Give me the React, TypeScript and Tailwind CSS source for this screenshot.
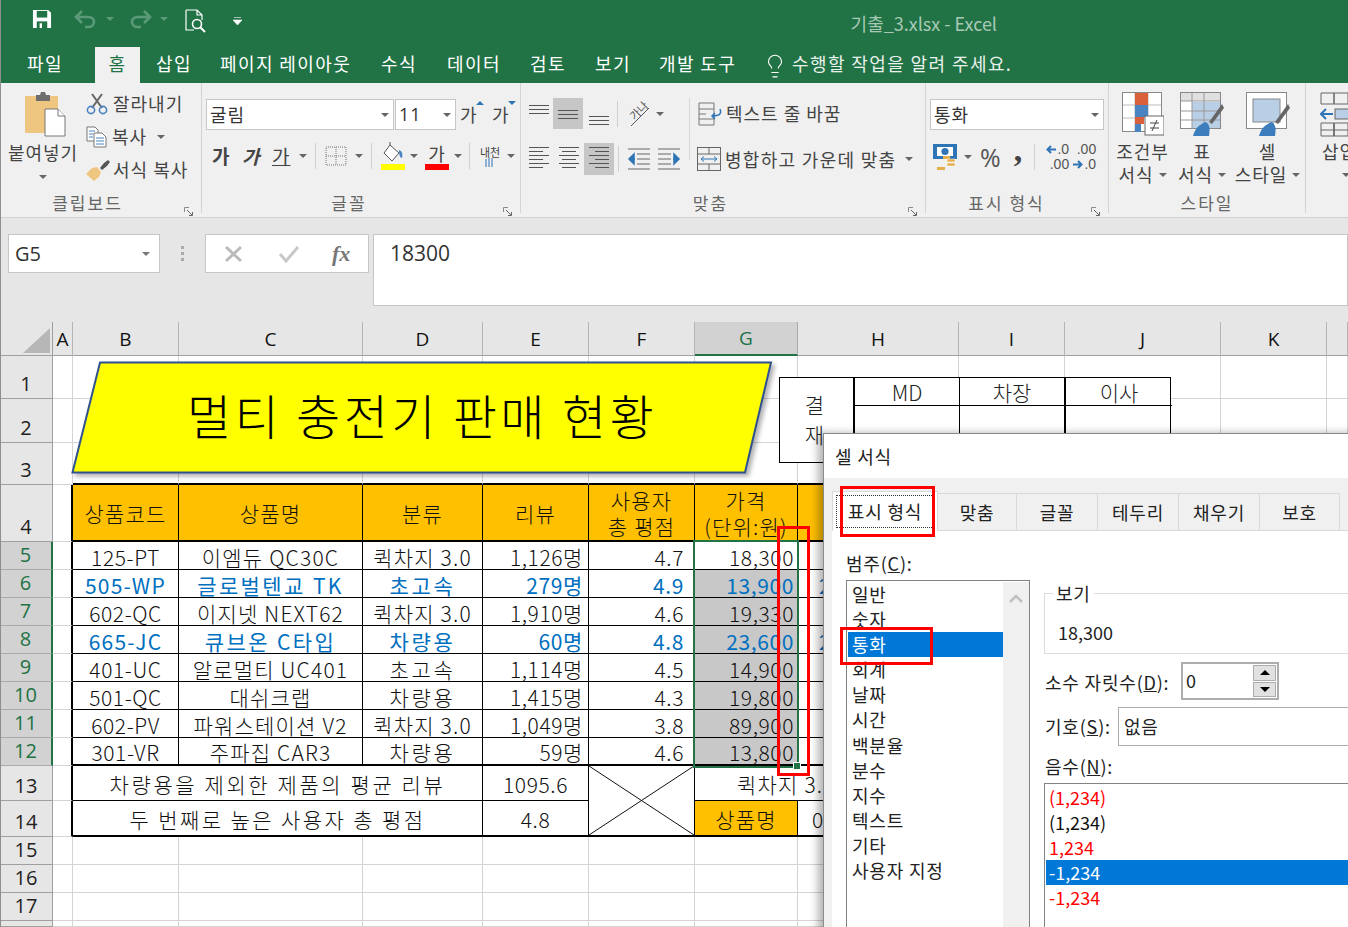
import type { ReactNode } from 'react';
import { Lightbulb } from 'lucide-react';

const Caret = ({ color = '#666', className = '' }: { color?: string; className?: string }) => (
  <svg width="8" height="4" viewBox="0 0 8 4" className={`shrink-0 ${className}`}>
    <path d="M0 0h8L4 4z" fill={color} />
  </svg>
);

function Launcher() {
  return (
    <svg width="10" height="10" viewBox="0 0 10 10" className="shrink-0">
      <path d="M.5 5V.5H5" fill="none" stroke="#8a8a8a" />
      <path d="M3 3l5 5M5 8.5h3.500V5" fill="none" stroke="#666" />
    </svg>
  );
}

// alignment icon, stacked lines
function AlignIcon({ lines, top = 0 }: { lines: [number, number][]; top?: number }) {
  return (
    <svg width="22" height="24" viewBox="0 0 22 24" className="shrink-0">
      {lines.map(([x, w], i) => (
        <rect key={i} x={x} y={top + i * 4} width={w} height="1" fill="#555" />
      ))}
    </svg>
  );
}

function SaveIcon() {
  return (
    <svg width="20" height="20" viewBox="0 0 21 21">
      <path d="M1 1h16l3 3v16H1z" fill="#fff" />
      <rect x="5" y="2" width="11" height="7" fill="#217346" />
      <rect x="5" y="13" width="11" height="7" fill="#217346" />
      <rect x="8" y="15" width="2.500" height="5" fill="#fff" />
    </svg>
  );
}

function UndoIcon({ flip = false }: { flip?: boolean }) {
  return (
    <svg width="23" height="20" viewBox="0 0 23 20" className={flip ? '-scale-x-100' : ''}>
      <path d="M8 2L2 8l6 6M2 8h12c4 0 6 2.500 6 5s-2 5-6 5h-3" fill="none" stroke="#5b9a78" strokeWidth="2.600" />
    </svg>
  );
}

function PreviewIcon() {
  return (
    <svg width="23" height="24" viewBox="0 0 23 24" fill="none" stroke="#fff" strokeWidth="1.200">
      <path d="M1 1h11l5 5v5M12 1v5h5M9 21H1V1" />
      <circle cx="12" cy="15" r="4.500" strokeWidth="1.600" />
      <path d="M15 18l5 5" strokeWidth="2" />
    </svg>
  );
}

function PasteIcon() {
  return (
    <svg width="42" height="46" viewBox="0 0 42 46">
      <rect x="0" y="5" width="33" height="37" rx="1" fill="#efc67f" />
      <path d="M11 4h4l1-3h4l1 3h4v6H11z" fill="#6e6e6e" />
      <path d="M20 18h13l7 7v20H20z" fill="#fff" stroke="#777" />
      <path d="M33 18v7h7" fill="#fff" stroke="#777" />
    </svg>
  );
}

function ScissorsIcon() {
  return (
    <svg width="22" height="22" viewBox="0 0 22 22" fill="none">
      <path d="M6 15L16 1M16 15L6 1" stroke="#666" strokeWidth="2" />
      <circle cx="5" cy="17" r="3.600" stroke="#4a83c2" strokeWidth="1.600" />
      <circle cx="17" cy="17" r="3.600" stroke="#4a83c2" strokeWidth="1.600" />
    </svg>
  );
}

function CopyIcon() {
  return (
    <svg width="21" height="22" viewBox="0 0 21 22">
      <path d="M1 1h8l3 3v11H1z" fill="#fff" stroke="#777" />
      <path d="M8 7h8l4 4v10H8z" fill="#fff" stroke="#777" />
      <path d="M3 5h6M3 8h4M3 11h4" stroke="#4a83c2" />
      <path d="M10 12h8M10 15h8M10 18h8" stroke="#4a83c2" />
    </svg>
  );
}

function BrushIcon() {
  return (
    <svg width="24" height="22" viewBox="0 0 24 22">
      <path d="M14 9l4-5 4-3 2 2-3 4-5 4z" fill="#555" />
      <path d="M0 15l6-6 5-1 4 5-2 5-5 4z" fill="#efc67f" />
    </svg>
  );
}

function BorderIcon() {
  return (
    <svg width="22" height="20" viewBox="0 0 22 20" fill="none" stroke="#777" strokeDasharray="1 1">
      <rect x="1" y="1" width="20" height="18" />
      <path d="M11 1v18M1 10h20" />
    </svg>
  );
}

function BucketIcon() {
  return (
    <svg width="24" height="28" viewBox="0 0 24 28">
      <path d="M9 3l9 8-7 8-8-8z" fill="#fff" stroke="#555" />
      <path d="M9 3V0" stroke="#555" />
      <path d="M18 8c3 1 4 4 3 8-2 0-3-3-3-8z" fill="#4a83c2" />
      <rect x="0" y="22" width="24" height="6" fill="#ffff00" />
    </svg>
  );
}

function OrientIcon() {
  return (
    <div className="relative h-[26px] w-[24px] shrink-0">
      <span className="absolute left-[1px] top-[3px] -rotate-45 whitespace-nowrap text-[11px] leading-[12px] tracking-normal text-[#555]">가나</span>
      <svg width="24" height="26" viewBox="0 0 24 26" fill="none" stroke="#555" className="absolute inset-0">
        <path d="M4 25L22 7" />
      </svg>
    </div>
  );
}

function WrapIcon() {
  return (
    <svg width="25" height="24" viewBox="0 0 25 24" fill="none">
      <path d="M1 1h15v22H1z" stroke="#777" />
      <path d="M1 7h15M1 12h7M1 17h15" stroke="#777" />
      <path d="M22 7c2 5-1 7-8 7m3-3l-3 3 3 3" stroke="#2f75b5" strokeWidth="1.500" />
    </svg>
  );
}

function IndentIcon({ right = false }: { right?: boolean }) {
  return (
    <svg width="24" height="22" viewBox="0 0 24 22" fill="none" className={right ? '-scale-x-100' : ''}>
      <path d="M1 1h22M10 6h13M10 11h13M10 16h13M1 21h22" stroke="#666" />
      <path d="M7 6l-5 5 5 5zM6 11h2" fill="#2f75b5" stroke="#2f75b5" strokeWidth="1.500" />
    </svg>
  );
}

function MergeIcon() {
  return (
    <svg width="25" height="24" viewBox="0 0 25 24" fill="none">
      <rect x=".5" y=".5" width="23" height="23" stroke="#666" />
      <path d="M1 7h23M1 17h23M12 1v6M12 17v6" stroke="#666" />
      <path d="M4 12h16M7 9.500L4 12l3 2.500M17 9.500l3 2.500-3 2.500" stroke="#2f75b5" />
    </svg>
  );
}

function CurrencyIcon() {
  return (
    <svg width="26" height="28" viewBox="0 0 26 28">
      <rect x="0" y="1" width="24" height="15" fill="#2f75b5" />
      <rect x="4" y="4" width="16" height="9" fill="#fff" />
      <circle cx="12" cy="8.500" r="3.600" fill="#2f75b5" />
      <rect x="10" y="13" width="7" height="3" fill="#e5ae4d" />
      <rect x="14" y="16" width="8" height="3" fill="#e5ae4d" stroke="#fff" strokeWidth=".5" />
      <rect x="14" y="20" width="8" height="3" fill="#e5ae4d" stroke="#fff" strokeWidth=".5" />
      <rect x="4" y="24" width="8" height="3" fill="#e5ae4d" />
    </svg>
  );
}

const SmallArrow = ({ right = false }: { right?: boolean }) => (
  <svg width="10" height="9" viewBox="0 0 10 9" fill="none" stroke="#2f75b5" strokeWidth="2" className={`mr-[1px] ${right ? '-scale-x-100' : ''}`}>
    <path d="M5 1L1.500 4.500 5 8M2 4.500h8" />
  </svg>
);

function DecimalIcon({ more = false }: { more?: boolean }) {
  return (
    <div className="flex w-[26px] flex-col items-end text-[14px] leading-[15px] tracking-normal text-[#555] [font-family:'Liberation_Sans']">
      <div className="flex items-center">
        {more && <SmallArrow />}
        <span>{more ? '.0' : '.00'}</span>
      </div>
      <div className="flex items-center">
        {!more && <SmallArrow right />}
        <span>{more ? '.00' : '.0'}</span>
      </div>
    </div>
  );
}

function CondFormatIcon() {
  return (
    <svg width="42" height="44" viewBox="0 0 42 44">
      <rect x=".5" y=".5" width="39" height="39" fill="#fff" stroke="#888" />
      <path d="M13 1v38M26 1v38M1 13h38M1 26h38" stroke="#bbb" />
      <rect x="13" y="1" width="13" height="12" fill="#d9603b" />
      <rect x="13" y="13" width="13" height="12" fill="#4a83c2" />
      <rect x="13" y="25" width="9" height="7" fill="#d9603b" />
      <rect x="13" y="32" width="6" height="8" fill="#4a83c2" />
      <rect x="23" y="24" width="19" height="19" fill="#fff" stroke="#666" />
      <path d="M28 31h9M28 36h9M35 28l-5 11" stroke="#444" />
    </svg>
  );
}

function TableStyleIcon() {
  return (
    <svg width="44" height="44" viewBox="0 0 44 44">
      <rect x=".5" y=".5" width="40" height="36" fill="#fff" stroke="#888" />
      <rect x="1" y="1" width="39" height="8" fill="#e0e0e0" />
      <rect x="12" y="10" width="28" height="26" fill="#b9cfe6" />
      <path d="M12 1v36M24 1v36M1 9h39M1 19h39M1 28h39" stroke="#999" />
      <path d="M42 12l2 4-12 16-3-2z" fill="#666" />
      <path d="M13 44c2-8 7-12 13-14 4 3 4 7 3 14z" fill="#3c7ebd" />
    </svg>
  );
}

function CellStyleIcon() {
  return (
    <svg width="44" height="44" viewBox="0 0 44 44">
      <rect x=".5" y=".5" width="40" height="36" fill="#fff" stroke="#888" />
      <rect x="7" y="7" width="27" height="23" fill="#b9cfe6" stroke="#888" />
      <path d="M42 12l2 4-12 16-3-2z" fill="#666" />
      <path d="M13 44c2-8 7-12 13-14 4 3 4 7 3 14z" fill="#3c7ebd" />
    </svg>
  );
}

function InsertCellIcon() {
  return (
    <svg width="30" height="46" viewBox="0 0 30 46" fill="none">
      <path d="M1 1h13v11H1zM14 1h14v11H14zM1 31h13v13H1zM14 31h14v13H14zM1 38h27M14 31v13" stroke="#666" />
      <rect x="15" y="17" width="15" height="10" fill="#b9cfe6" stroke="#666" />
      <path d="M1 22h12M6 17l-5 5 5 5" stroke="#2f75b5" strokeWidth="2" />
    </svg>
  );
}

function Dropdown({ text, width, latin = false }: { text: string; width: string; latin?: boolean }) {
  return (
    <div className={`flex h-[31px] items-center justify-between border border-[#c6c6c6] bg-white pl-[3px] pr-[4px] text-[18px] text-[#333] ${width} ${latin ? "[font-family:'Open_Sans']" : ''}`}>
      <span>{text}</span>
      <Caret />
    </div>
  );
}

function GroupLabel({ text, launcher = true, offset = '' }: { text: string; launcher?: boolean; offset?: string }) {
  return (
    <div className={`absolute -bottom-[1px] left-0 right-0 text-center text-[17px] leading-[22px] text-[#666] tracking-[2px] ${offset}`}>
      {text}
      {launcher && <div className="absolute bottom-[-3px] right-[7px]"><Launcher /></div>}
    </div>
  );
}

function TitleBar() {
  const tabs: [string, string][] = [
    ['파일', 'w-[68px]'],
    ['', 'w-[45px]'],
    ['삽입', 'ml-[16px] w-[64px]'],
    ['페이지 레이아웃', 'w-[161px]'],
    ['수식', 'w-[66px]'],
    ['데이터', 'w-[83px]'],
    ['검토', 'w-[65px]'],
    ['보기', 'w-[64px]'],
    ['개발 도구', 'w-[108px]'],
  ];
  return (
    <header className="h-[83px] shrink-0 bg-[#217346] text-white">
      <div className="flex h-[47px] items-start pl-[32px] pt-[9px]">
        <SaveIcon />
        <div className="ml-[22px]"><UndoIcon /></div>
        <Caret color="#5b9a78" className="ml-[9px] mt-[8px]" />
        <div className="ml-[15px]"><UndoIcon flip /></div>
        <Caret color="#5b9a78" className="ml-[8px] mt-[8px]" />
        <div className="ml-[17px]"><PreviewIcon /></div>
        <svg width="9" height="8" viewBox="0 0 9 8" className="ml-[25px] mt-[8px]">
          <path d="M1 .5h7M0 3h9L4.500 8z" fill="#fff" stroke="#fff" strokeWidth=".6" />
        </svg>
        <span className="ml-auto mr-[351px] mt-[2px] text-[18px] leading-[24px] text-[#a9c9b6]">기출_3.xlsx - Excel</span>
      </div>
      <nav className="flex h-[36px] pl-[27px] text-[18px] tracking-[1.4px]">
        {tabs.map(([label, cls], i) =>
          i === 1 ? (
            <div key={i} className={`flex items-center justify-center bg-[#f0f0f0] pb-[3px] text-[#217346] ${cls}`}>홈</div>
          ) : (
            <div key={i} className={`flex items-center pb-[3px] ${cls}`}>{label}</div>
          ),
        )}
        <div className="flex w-[25px] items-center pt-[2px]"><Lightbulb size={26} strokeWidth={1} className="-ml-[5px]" /></div>
        <div className="flex items-center pb-[3px] text-[#e9f1ec]">수행할 작업을 알려 주세요.</div>
      </nav>
    </header>
  );
}

function Ribbon() {
  return (
    <section className="flex h-[135px] shrink-0 border-b border-[#d2d2d2] bg-[#f0f0f0] text-[18px] tracking-[1px] text-[#444]">
      {/* 클립보드 */}
      <div className="relative flex h-[130px] w-[202px] shrink-0 border-r border-[#d4d4d4] pt-[8px]">
        <div className="flex w-[86px] flex-col items-center">
          <div className="ml-[5px]"><PasteIcon /></div>
          <span className="mt-[3px] whitespace-nowrap leading-[24px]">붙여넣기</span>
          <Caret className="mt-[11px]" />
        </div>
        <div className="-mt-[4px] flex flex-col">
          <div className="flex h-[33px] items-center gap-[5px]"><ScissorsIcon /><span>잘라내기</span></div>
          <div className="flex h-[33px] items-center gap-[5px]"><CopyIcon /><span>복사</span><Caret className="ml-[5px]" /></div>
          <div className="flex h-[33px] items-center gap-[3px]"><BrushIcon /><span>서식 복사</span></div>
        </div>
        <GroupLabel text="클립보드" offset="pr-[26px]" />
      </div>
      {/* 글꼴 */}
      <div className="relative h-[130px] w-[319px] shrink-0 border-r border-[#d4d4d4] pl-[4px] pt-[16px]">
        <div className="flex items-center">
          <Dropdown text="굴림" width="w-[188px]" />
          <Dropdown text="11" width="ml-[1px] w-[61px]" latin />
          <div className="relative ml-[4px] w-[18px]">가<span className="absolute -right-[6px] top-0 h-0 w-0 border-x-[4px] border-b-[4px] border-x-transparent border-b-[#2f75b5]" /></div>
          <div className="relative ml-[14px] w-[18px]">가<span className="absolute -right-[6px] top-0 h-0 w-0 border-x-[4px] border-t-[4px] border-x-transparent border-t-[#2f75b5]" /></div>
        </div>
        <div className="mt-[10px] flex h-[32px] items-center">
          <span className="ml-[6px] w-[30px] text-[19px] font-bold">가</span>
          <span className="w-[30px] text-[19px] font-bold italic">가</span>
          <span className="w-[24px] text-[19px] underline">가</span>
          <Caret className="ml-[3px]" />
          <span className="ml-[8px] mr-[9px] h-[26px] w-px bg-[#d0d0d0]" />
          <BorderIcon />
          <Caret className="ml-[8px]" />
          <span className="ml-[8px] mr-[9px] h-[26px] w-px bg-[#d0d0d0]" />
          <BucketIcon />
          <Caret className="ml-[5px]" />
          <div className="ml-[7px] flex w-[24px] flex-col items-center leading-[22px]">
            <span className="h-[22px]">가</span>
            <span className="h-[6px] w-[24px] bg-[#ff0000]" />
          </div>
          <Caret className="ml-[5px]" />
          <span className="ml-[7px] mr-[9px] h-[26px] w-px bg-[#d0d0d0]" />
          <div className="flex w-[22px] flex-col items-center text-[11px] leading-[12px] tracking-normal">
            <span className="whitespace-nowrap">내천</span>
            <svg width="10" height="9" viewBox="0 0 10 9"><path d="M1 1v8M4 0v9M7 0v9" stroke="#2f75b5" /></svg>
          </div>
          <Caret className="ml-[6px]" />
        </div>
        <GroupLabel text="글꼴" offset="pr-[24px]" />
      </div>
      {/* 맞춤 */}
      <div className="relative h-[130px] w-[405px] shrink-0 border-r border-[#d4d4d4] pl-[8px] pt-[15px]">
        <div className="flex h-[31px] items-center">
          <div className="flex w-[24px] items-center"><AlignIcon top={3} lines={[[0, 20], [0, 20], [0, 20]]} /></div>
          <div className="flex h-[31px] w-[30px] items-center justify-center bg-[#c6c6c6]"><AlignIcon top={8} lines={[[1, 20], [1, 20], [1, 20]]} /></div>
          <div className="ml-[6px] flex w-[22px] items-center"><AlignIcon top={14} lines={[[0, 20], [0, 20], [0, 20]]} /></div>
          <span className="ml-[6px] mr-[9px] h-[26px] w-px bg-[#d0d0d0]" />
          <OrientIcon />
          <Caret className="ml-[5px]" />
          <span className="ml-[25px] mr-[8px] h-[62px] w-px self-start bg-[#d8d8d8]" />
          <WrapIcon />
          <span className="ml-[3px]">텍스트 줄 바꿈</span>
        </div>
        <div className="mt-[14px] flex h-[32px] items-center">
          <div className="w-[30px]"><AlignIcon lines={[[0, 20], [0, 14], [0, 20], [0, 14], [0, 20], [0, 14]]} /></div>
          <div className="w-[25px]"><AlignIcon lines={[[0, 20], [3, 14], [0, 20], [3, 14], [0, 20], [3, 14]]} /></div>
          <div className="flex h-[32px] w-[30px] items-center justify-center bg-[#c6c6c6]"><AlignIcon lines={[[1, 20], [7, 14], [1, 20], [7, 14], [1, 20], [7, 14]]} /></div>
          <span className="ml-[4px] mr-[8px] h-[26px] w-px bg-[#d0d0d0]" />
          <IndentIcon />
          <div className="ml-[6px]"><IndentIcon right /></div>
          <div className="ml-[16px]"><MergeIcon /></div>
          <span className="ml-[3px] whitespace-nowrap tracking-[1.3px]">병합하고 가운데 맞춤</span>
          <Caret className="ml-[9px]" />
        </div>
        <GroupLabel text="맞춤" offset="pr-[25px]" />
      </div>
      {/* 표시 형식 */}
      <div className="relative h-[130px] w-[183px] shrink-0 border-r border-[#d4d4d4] pl-[4px] pt-[16px]">
        <Dropdown text="통화" width="w-[174px]" />
        <div className="mt-[11px] flex h-[32px] items-center">
          <div className="ml-[3px]"><CurrencyIcon /></div>
          <Caret className="ml-[5px]" />
          <span className="ml-[8px] text-[25px] leading-none tracking-normal text-[#555] [font-family:'Open_Sans']">%</span>
          <span className="-mt-[14px] ml-[13px] text-[34px] font-bold leading-none tracking-normal [font-family:'Liberation_Serif']">,</span>
          <span className="ml-[12px] mr-[8px] h-[26px] w-px bg-[#d0d0d0]" />
          <DecimalIcon more />
          <div className="ml-[1px]"><DecimalIcon /></div>
        </div>
        <GroupLabel text="표시 형식" offset="pr-[21px]" />
      </div>
      {/* 스타일 */}
      <div className="relative flex h-[130px] w-[197px] shrink-0 border-r border-[#d4d4d4] pl-[4px] pt-[9px]">
        {[
          { icon: <CondFormatIcon />, top: '조건부', bottom: '서식', w: 'w-[59px]' },
          { icon: <TableStyleIcon />, top: '표', bottom: '서식', w: 'w-[60px]' },
          { icon: <CellStyleIcon />, top: '셀', bottom: '스타일', w: 'w-[71px]' },
        ].map(item => (
          <div key={item.top} className={`flex flex-col items-center leading-[23px] ${item.w}`}>
            <div className="h-[46px]">{item.icon}</div>
            <span className="mt-[2px]">{item.top}</span>
            <span className="flex items-center gap-[5px] whitespace-nowrap">{item.bottom}<Caret /></span>
          </div>
        ))}
        <GroupLabel text="스타일" launcher={false} />
      </div>
      {/* 셀 */}
      <div className="flex flex-col pl-[14px] pt-[9px] leading-[23px]">
        <InsertCellIcon />
        <span className="mt-[2px] whitespace-nowrap pl-[2px]">삽입</span>
        <Caret className="ml-[22px] mt-[10px]" />
      </div>
    </section>
  );
}

function FormulaBar() {
  return (
    <section className="flex h-[104px] shrink-0 items-start bg-[#e6e6e6] pl-[8px] pt-[16px]">
      <div className="flex h-[39px] w-[152px] items-center justify-between border border-[#c6c6c6] bg-white pl-[6px] pr-[9px] text-[20px] text-[#333] [font-family:'Open_Sans']">
        G5
        <Caret color="#777" />
      </div>
      <div className="flex h-[39px] w-[45px] flex-col items-center justify-center gap-[3px]">
        <span className="h-[3px] w-[3px] bg-[#aaa]" />
        <span className="h-[3px] w-[3px] bg-[#aaa]" />
        <span className="h-[3px] w-[3px] bg-[#aaa]" />
      </div>
      <div className="flex h-[39px] w-[164px] items-center border border-[#c6c6c6] bg-white pl-[18px]">
        <svg width="20" height="18" viewBox="0 0 20 18" stroke="#bbb" strokeWidth="3"><path d="M2 2l15 14M17 2L2 16" /></svg>
        <svg width="22" height="18" viewBox="0 0 22 18" fill="none" stroke="#c8c8c8" strokeWidth="3" className="ml-[34px]"><path d="M2 9l6 7L20 2" /></svg>
        <span className="ml-[32px] text-[22px] font-bold italic leading-none text-[#777] [font-family:'Liberation_Serif']">fx</span>
      </div>
      <div className="ml-[4px] h-[72px] flex-1 border border-[#c6c6c6] bg-white pl-[16px] pt-[3px] text-[21px] leading-[30px] text-[#333] [font-family:'Open_Sans']">18300</div>
    </section>
  );
}

const thin = 'border-r border-b border-[#d4d4d4]';

const ColHead = ({ label, active = false }: { label: string; active?: boolean }) => (
  <div className={`flex items-center justify-center border-r text-[19px] font-normal tracking-normal [font-family:'Open_Sans'] ${active ? 'border-b-2 border-b-[#217346] border-r-[#aaa] bg-[#d2d2d2] text-[#217346]' : 'border-b border-b-[#9f9f9f] border-r-[#b5b5b5] bg-[#e6e6e6] text-[#111]'}`}>
    {label}
  </div>
);

const RowHead = ({ n, active = false }: { n: number; active?: boolean }) => (
  <div className={`flex justify-center overflow-hidden text-[20px] font-normal leading-[26px] tracking-normal [font-family:'Open_Sans'] ${n === 18 ? 'items-start' : 'items-end pb-[1px]'} ${active ? 'border-b border-r-2 border-b-[#aaa] border-r-[#217346] bg-[#d2d2d2] text-[#217346]' : 'border-b border-r border-b-[#9f9f9f] border-r-[#9f9f9f] bg-[#e6e6e6] text-[#222]'}`}>
    {n}
  </div>
);

const Blank = ({ className = thin }: { className?: string }) => <div className={className} />;

function Td({ children, className = '', align = 'center' }: { children?: ReactNode; className?: string; align?: 'center' | 'right' | 'left' }) {
  const justify = align === 'center' ? 'justify-center' : align === 'right' ? 'justify-end' : 'justify-start';
  return (
    <div className={`flex items-center overflow-hidden whitespace-nowrap border-b border-r border-black pt-[2px] ${justify} ${className}`}>
      {children}
    </div>
  );
}

const items = [
  { n: 5, code: '125-PT', name: '이엠듀 QC30C', kind: '퀵차지 3.0', rev: '1,126명', score: '4.7', price: '18,300', hi: false },
  { n: 6, code: '505-WP', name: '글로벌텐교 TK', kind: '초고속', rev: '279명', score: '4.9', price: '13,900', hi: true },
  { n: 7, code: '602-QC', name: '이지넷 NEXT62', kind: '퀵차지 3.0', rev: '1,910명', score: '4.6', price: '19,330', hi: false },
  { n: 8, code: '665-JC', name: '큐브온 C타입', kind: '차량용', rev: '60명', score: '4.8', price: '23,600', hi: true },
  { n: 9, code: '401-UC', name: '알로멀티 UC401', kind: '초고속', rev: '1,114명', score: '4.5', price: '14,900', hi: false },
  { n: 10, code: '501-QC', name: '대쉬크랩', kind: '차량용', rev: '1,415명', score: '4.3', price: '19,800', hi: false },
  { n: 11, code: '602-PV', name: '파워스테이션 V2', kind: '퀵차지 3.0', rev: '1,049명', score: '3.8', price: '89,900', hi: false },
  { n: 12, code: '301-VR', name: '주파집 CAR3', kind: '차량용', rev: '59명', score: '4.6', price: '13,800', hi: false },
];

function Sheet() {
  const cols = ['A', 'B', 'C', 'D', 'E', 'F', 'G', 'H', 'I', 'J', 'K', ''];
  return (
    <div className="grid h-[605px] grid-cols-[53px_20px_106px_184px_120px_106px_106px_103px_161px_106px_156px_106px_21px] grid-rows-[34px_43px_44px_42px_57px_28px_28px_28px_28px_28px_28px_28px_28px_35px_36px_28px_28px_28px_6px] bg-white text-[21px] font-light leading-[24px] tracking-[0.6px] text-[#111]">
      {/* header row */}
      <div className="relative border-b border-r border-[#9f9f9f] bg-[#e6e6e6]">
        <svg width="27" height="25" viewBox="0 0 27 25" className="absolute bottom-[2px] right-[2px]"><path d="M27 0v25H0z" fill="#b7b7b7" /></svg>
      </div>
      {cols.map(c => <ColHead key={c} label={c} active={c === 'G'} />)}

      {/* rows 1-3 */}
      {[1, 2, 3].map(n => (
        <div key={n} className="contents">
          <RowHead n={n} />
          {cols.map((c, i) => (
            <Blank key={c} className={n === 3 && i >= 1 && i <= 7 ? 'border-b-2 border-r border-b-black border-r-[#d4d4d4]' : thin} />
          ))}
        </div>
      ))}

      {/* row 4 */}
      <RowHead n={4} />
      <Blank className="border-b border-r-2 border-b-[#d4d4d4] border-r-black" />
      {['상품코드', '상품명', '분류', '리뷰'].map(h => <Td key={h} className="border-b-2 bg-[#ffc000] !pt-0 tracking-[1.2px]">{h}</Td>)}
      <Td className="flex-col gap-[2px] border-b-2 bg-[#ffc000] !pt-0 tracking-[1.2px]"><span>사용자</span><span>총 평점</span></Td>
      <Td className="flex-col gap-[2px] border-b-2 bg-[#ffc000] !pt-0 tracking-[1.2px]"><span>가격</span><span>(단위:원)</span></Td>
      <Td className="border-b-2 bg-[#ffc000]" />
      {[0, 1, 2, 3].map(i => <Blank key={i} />)}

      {/* rows 5-12 */}
      {items.map(it => {
        const text = it.hi ? 'font-normal text-[#0070c0]' : '';
        const last = it.n === 12 ? 'border-b-2' : '';
        return (
          <div key={it.n} className="contents">
            <RowHead n={it.n} active />
            <Blank className="border-b border-r-2 border-b-[#d4d4d4] border-r-black" />
            <Td className={`${it.hi ? 'tracking-[1.2px]' : ''} ${text} ${last}`}>{it.code}</Td>
            <Td className={`${it.hi ? 'tracking-[2.400px]' : 'tracking-[1.2px]'} ${text} ${last}`}>{it.name}</Td>
            <Td className={`${it.kind.length === 3 ? 'tracking-[2.600px]' : 'tracking-[1.2px]'} ${text} ${last}`}>{it.kind}</Td>
            <Td align="right" className={`pr-[5px] ${text} ${last}`}>{it.rev}</Td>
            <Td align="right" className={`pr-[10px] ${text} ${last}`}>{it.score}</Td>
            <Td align="right" className={`pr-[3px] ${text} ${last} ${it.n > 5 ? 'bg-[#c8c8c8]' : ''}`}>{it.price}</Td>
            <Td align="left" className={`pl-[21px] ${text} ${last}`}>{it.hi ? '2' : ''}</Td>
            {[0, 1, 2, 3].map(i => <Blank key={i} />)}
          </div>
        );
      })}

      {/* rows 13-14 */}
      <RowHead n={13} />
      <Blank className="border-b border-r-2 border-b-[#d4d4d4] border-r-black" />
      <Td className="col-span-3 tracking-[2.600px]">차량용을 제외한 제품의 평균 리뷰</Td>
      <Td>1095.6</Td>
      <Td className="row-span-2 border-b-2 !pt-0">
        <svg className="h-full w-full" viewBox="0 0 100 100" preserveAspectRatio="none">
          <path d="M0 0L100 100M100 0L0 100" stroke="#111" strokeWidth="1" vectorEffect="non-scaling-stroke" />
        </svg>
      </Td>
      <Td align="left" className="col-span-2 pl-[42px] tracking-[1.2px]">퀵차지 3.0</Td>
      {[0, 1, 2, 3].map(i => <Blank key={i} />)}

      <RowHead n={14} />
      <Blank className="border-b border-r-2 border-b-[#d4d4d4] border-r-black" />
      <Td className="col-span-3 border-b-2 tracking-[2.400px]">두 번째로 높은 사용자 총 평점</Td>
      <Td className="border-b-2">4.8</Td>
      <Td className="border-b-2 bg-[#ffc000] tracking-[1.2px]">상품명</Td>
      <Td align="left" className="border-b-2 pl-[14px]">0</Td>
      {[0, 1, 2, 3].map(i => <Blank key={i} />)}

      {/* rows 15-18 */}
      {[15, 16, 17, 18].map(n => (
        <div key={n} className="contents">
          <RowHead n={n} />
          {cols.map(c => <Blank key={c} />)}
        </div>
      ))}
    </div>
  );
}

function TitleShape() {
  return (
    <div className="absolute left-[68px] top-[358px] flex h-[120px] w-[710px] items-center justify-center">
      <svg width="710" height="120" viewBox="0 0 710 120" className="absolute inset-0 drop-shadow-[3px_3px_2px_rgba(0,0,0,0.3)]">
        <path d="M32 4.500H703L677 114.500H4.500z" fill="#ffff00" stroke="#2f528f" strokeWidth="2" />
      </svg>
      <span className="relative -ml-[2px] -mt-[9px] text-[48px] font-light leading-none tracking-[3.400px] text-black">멀티 충전기 판매 현황</span>
    </div>
  );
}

function ApprovalBox() {
  return (
    <div className="absolute left-[779px] top-[377px] grid h-[86px] w-[392px] grid-cols-[75px_105px_106px_106px] grid-rows-[28px_58px] border border-black bg-white text-[21px] font-light leading-[24px] text-[#222]">
      <div className="row-span-2 flex flex-col items-center justify-center gap-[6px] border-r-2 border-black pb-[4px] pr-[4px]"><span>결</span><span>재</span></div>
      <div className="flex items-center justify-center border-b border-r border-black">MD</div>
      <div className="flex items-center justify-center border-b border-r-2 border-black">차장</div>
      <div className="flex items-center justify-center border-b border-black">이사</div>
      <div className="border-r border-black" />
      <div className="border-r-2 border-black" />
      <div />
    </div>
  );
}

function CellFormatDialog() {
  const categories = ['일반', '숫자', '통화', '회계', '날짜', '시간', '백분율', '분수', '지수', '텍스트', '기타', '사용자 지정'];
  const negatives: [string, string][] = [
    ['(1,234)', 'text-[#ff0000]'],
    ['(1,234)', 'text-[#111]'],
    ['1,234', 'text-[#ff0000]'],
    ['-1,234', 'bg-[#0078d7] text-white'],
    ['-1,234', 'text-[#ff0000]'],
  ];
  const tabs: [string, string][] = [
    ['맞춤', 'w-[79px]'],
    ['글꼴', 'w-[81px]'],
    ['테두리', 'w-[81px]'],
    ['채우기', 'w-[81px]'],
    ['보호', 'w-[80px]'],
  ];
  return (
    <div className="absolute isolate left-[823px] top-[433px] flex h-[500px] w-[540px] flex-col overflow-hidden border-l border-t border-[#8a8a8a] bg-white text-[18px] tracking-[0.8px] text-[#222] shadow-[-5px_0_8px_rgba(0,0,0,0.3)]">
      <div className="flex h-[44px] shrink-0 items-center pl-[11px]">셀 서식</div>
      <div className="flex flex-1 flex-col bg-[#f0f0f0] pl-[8px] pt-[13px]">
        <div className="flex h-[39px] shrink-0 items-stretch">
          <div className="z-10 -mb-px w-[106px] border-x border-t border-[#d9d9d9] bg-white p-[3px]">
            <div className="flex h-full items-center justify-center border border-dotted border-[#333]">표시 형식</div>
          </div>
          {tabs.map(([t, w]) => (
            <div key={t} className={`mt-[2px] flex items-center justify-center border-r border-t border-[#d9d9d9] ${w}`}>{t}</div>
          ))}
        </div>
        <div className="flex flex-1 border-t border-[#d9d9d9] bg-white pl-[14px]">
          <div className="w-[184px] shrink-0 pt-[21px]">
            <div className="h-[22px] leading-[22px]">범주(<span className="underline">C</span>):</div>
            <div className="mt-[6px] flex h-[400px] border border-[#828282] bg-white pt-[1px]">
              <ul className="flex-1 pl-[1px]">
                {categories.map(c => (
                  <li key={c} className={`h-[25.100px] pl-[4px] leading-[25px] ${c === '통화' ? 'bg-[#0078d7] text-white' : ''}`}>{c}</li>
                ))}
              </ul>
              <div className="flex w-[26px] justify-center bg-[#f0f0f0] pt-[12px]">
                <svg width="14" height="9" viewBox="0 0 14 9" fill="none" stroke="#c0c0c0" strokeWidth="2.500"><path d="M1 8l6-6 6 6" /></svg>
              </div>
            </div>
          </div>
          <div className="ml-[14px] w-[400px] shrink-0">
            <fieldset className="mt-[51px] h-[72px] border border-[#dcdcdc] pl-[13px]">
              <legend className="ml-[-5px] px-[3px] leading-[22px]">보기</legend>
              <div className="mt-[17px] leading-[22px] tracking-normal">18,300</div>
            </fieldset>
            <div className="mt-[8px] flex h-[38px] items-start">
              <span className="mt-[9px] w-[137px] whitespace-nowrap pl-[1px] leading-[22px]">소수 자릿수(<span className="underline">D</span>):</span>
              <div className="flex h-[38px] w-[98px] justify-between border-2 border-[#adadad] py-[1px] pl-[3px] pr-[1px]">
                <span className="leading-[30px]">0</span>
                <div className="flex w-[23px] flex-col gap-[1px]">
                  <div className="flex flex-1 items-center justify-center border border-[#adadad] bg-[#e1e1e1]"><span className="h-0 w-0 border-x-[5px] border-b-[5px] border-x-transparent border-b-black" /></div>
                  <div className="flex flex-1 items-center justify-center border border-[#adadad] bg-[#e1e1e1]"><span className="h-0 w-0 border-x-[5px] border-t-[5px] border-x-transparent border-t-black" /></div>
                </div>
              </div>
            </div>
            <div className="mt-[7px] flex h-[39px] items-center">
              <span className="w-[74px] whitespace-nowrap pl-[1px]">기호(<span className="underline">S</span>):</span>
              <div className="flex h-[39px] flex-1 items-center border border-[#adadad] pl-[5px]">없음</div>
            </div>
            <div className="mt-[9px] h-[22px] pl-[1px] leading-[22px]">음수(<span className="underline">N</span>):</div>
            <ul className="mt-[6px] h-[200px] border border-[#828282] pl-px pt-px tracking-normal">
              {negatives.map(([t, cls], i) => (
                <li key={i} className={`h-[25px] pl-[3px] leading-[25px] ${cls}`}>{t}</li>
              ))}
            </ul>
          </div>
        </div>
      </div>
    </div>
  );
}

const RedBox = ({ className }: { className: string }) => (
  <div className={`absolute border-[3px] border-[#ff0000] ${className}`} />
);

export default function App() {
  return (
    <div className="relative flex h-[927px] w-[1348px] flex-col overflow-hidden bg-white [font-family:'Noto_Sans_CJK_KR','Noto_Sans',sans-serif]">
      <TitleBar />
      <Ribbon />
      <FormulaBar />
      <Sheet />

      {/* floating items over the sheet */}
      <TitleShape />
      <ApprovalBox />
      <div className="absolute left-[693px] top-[540px] h-[228px] w-[106px] border-2 border-[#217346]" />
      <div className="absolute left-[794px] top-[763px] h-[6px] w-[6px] bg-[#217346] outline outline-1 outline-white" />
      <CellFormatDialog />
      <RedBox className="left-[777px] top-[526px] h-[250px] w-[33px]" />
      <RedBox className="left-[840px] top-[486px] h-[51px] w-[95px]" />
      <RedBox className="left-[840px] top-[627px] h-[38px] w-[93px]" />
      <div className="absolute inset-y-0 left-0 w-px bg-[#8f8f8f]" />
    </div>
  );
}
